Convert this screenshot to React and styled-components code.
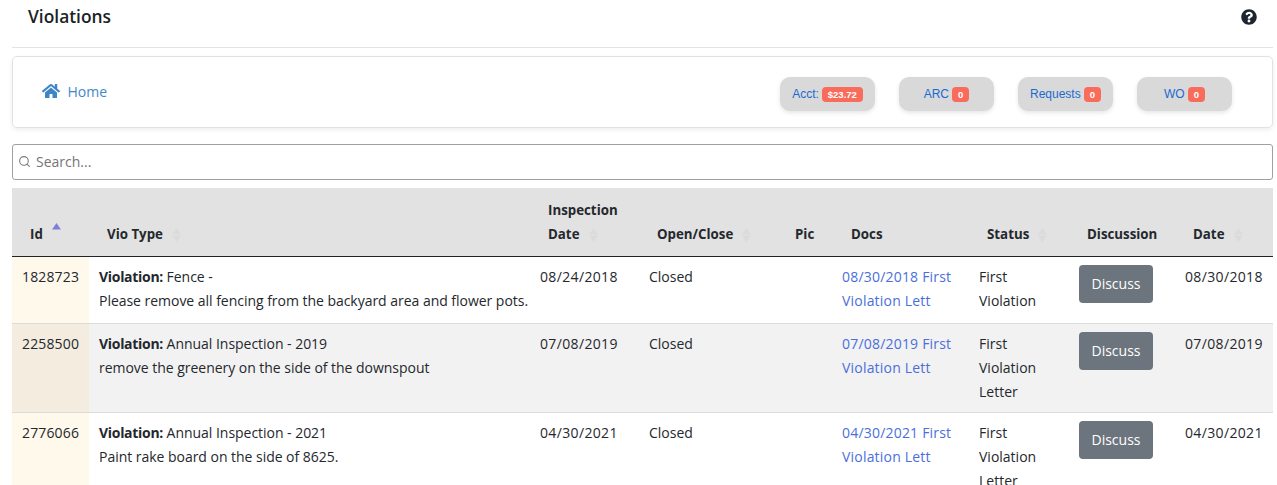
import React from 'react'
import styled, { createGlobalStyle } from 'styled-components'
import { FaHome, FaQuestionCircle } from 'react-icons/fa'
import { FiSearch } from 'react-icons/fi'

const GlobalStyle = createGlobalStyle`
  html, body {
    margin: 0;
    height: 485px;
    overflow: hidden;
    background: #fff;
    font-family: "Open Sans", "Noto Sans", sans-serif;
    font-size: 14px;
    color: #212529;
  }
`

const Page = styled.div`
  padding: 0 4px 0 12px;
`

const TitleBar = styled.header`
  display: flex;
  justify-content: space-between;
  align-items: center;
  height: 47px;
  padding: 0 16px 15px;
  box-sizing: border-box;
  box-shadow: 0 1px 0 #e3e3e3;
`

const Title = styled.h1`
  margin: 0;
  font-size: 17.4px;
  font-weight: 600;
  color: #1c1f24;
`

const HelpIcon = styled(FaQuestionCircle)`
  font-size: 16px;
  margin-top: 1px;
  color: #1c2530;
`

const NavCard = styled.nav`
  display: flex;
  justify-content: space-between;
  align-items: center;
  height: 72px;
  margin-top: 9px;
  padding: 0 40px 0 29px;
  box-sizing: border-box;
  border: 1px solid #e2e2e2;
  border-radius: 5px;
  box-shadow: 0 2px 5px rgba(0, 0, 0, 0.07);
`

const HomeLink = styled.a`
  display: flex;
  align-items: center;
  gap: 7.5px;
  margin-bottom: 2px;
  color: #3f88c9;
  font-size: 14px;
`

const HomeIcon = styled(FaHome)`
  font-size: 18px;
  color: #3d85c6;
`

const Pills = styled.div`
  display: flex;
  gap: 24px;
  margin-top: 4px;
`

const Pill = styled.a`
  display: flex;
  align-items: center;
  justify-content: center;
  gap: 3px;
  width: 95px;
  height: 34px;
  border-radius: 10px;
  background: #d9d9d9;
  box-shadow: 0 2px 4px rgba(0, 0, 0, 0.1);
  color: #1b6ad2;
  font-family: "Liberation Sans", Arial, sans-serif;
  font-size: 12px;
`

const Badge = styled.span`
  padding: 2px 6px;
  border-radius: 4px;
  background: #f96b5b;
  color: #fff;
  font-size: 9.5px;
  font-weight: 700;
  line-height: 11px;
`

const SearchBox = styled.label`
  display: flex;
  align-items: center;
  gap: 5px;
  height: 36px;
  margin-top: 16px;
  padding: 0 0 2px 5px;
  box-sizing: border-box;
  border: 1px solid #a0a0a0;
  border-radius: 3px;
  color: #7c7c7c;
`

const SearchInput = styled.input`
  flex: 1;
  border: 0;
  outline: 0;
  padding: 0;
  font: inherit;
  &::placeholder {
    color: #757575;
    opacity: 1;
  }
`

const Table = styled.table`
  width: 1261px;
  margin-top: 8px;
  border-collapse: collapse;
  table-layout: fixed;
`

const HeadCell = styled.th`
  height: 68px;
  padding: 0 0 10px 18px;
  box-sizing: border-box;
  background: #e2e2e2;
  border-bottom: 1px solid #212529;
  text-align: left;
  vertical-align: bottom;
  font-size: 13.3px;
  font-weight: 700;
  line-height: 24px;
  color: #24282d;
  white-space: ${p => (p.$wrap ? 'normal' : 'nowrap')};
`

const SortMark = styled.svg`
  width: 9px;
  height: 14px;
  margin-left: 9px;
  vertical-align: ${p => (p.$active ? '2px' : '-3px')};
`

const Row = styled.tr`
  height: 67px;
  background: ${p => (p.$even ? '#f2f2f2' : '#fff')};
  border-bottom: 1px solid #dcdcdc;
`

const Cell = styled.td`
  padding: 8px 8px 8px 10px;
  vertical-align: top;
  line-height: 24px;
  font-size: 14px;
  color: #24282d;
`

const IdCell = styled(Cell)`
  letter-spacing: 0.15px;
  background: ${p => (p.$even ? '#f3ecdf' : '#fff9ec')};
`

const NoteCell = styled(Cell)`
  padding-right: 0;
  letter-spacing: -0.03px;
  white-space: nowrap;
`

const NoteLabel = styled.strong`
  letter-spacing: -0.3px;
`

const DateCell = styled(Cell)`
  padding-right: 0;
  letter-spacing: 0.35px;
`

const DocCell = styled(Cell)`
  padding: 8px 0 8px 9px;
`

const DocLink = styled.a`
  color: #4a6fdc;
  letter-spacing: 0.2px;
`

const DiscussButton = styled.button`
  display: block;
  width: 74px;
  height: 38px;
  padding: 0;
  border: 0;
  border-radius: 4px;
  background: #6c757d;
  color: #fff;
  font: inherit;
`

const columns = [
  { label: 'Id', width: 77, sort: 'active' },
  { label: 'Vio Type', width: 441, sort: 'idle' },
  { label: 'Inspection Date', width: 109, sort: 'idle', wrap: true },
  { label: 'Open/Close', width: 138, sort: 'idle' },
  { label: 'Pic', width: 56 },
  { label: 'Docs', width: 136 },
  { label: 'Status', width: 100, sort: 'idle' },
  { label: 'Discussion', width: 106 },
  { label: 'Date', width: 98, sort: 'idle' },
]

const violations = [
  {
    id: '1828723',
    type: 'Fence -',
    note: 'Please remove all fencing from the backyard area and flower pots.',
    inspected: '08/24/2018',
    doc: '08/30/2018 First Violation Lett',
    status: 'First Violation',
    date: '08/30/2018',
  },
  {
    id: '2258500',
    type: 'Annual Inspection - 2019',
    note: 'remove the greenery on the side of the downspout',
    inspected: '07/08/2019',
    doc: '07/08/2019 First Violation Lett',
    status: 'First Violation Letter',
    date: '07/08/2019',
  },
  {
    id: '2776066',
    type: 'Annual Inspection - 2021',
    note: 'Paint rake board on the side of 8625.',
    inspected: '04/30/2021',
    doc: '04/30/2021 First Violation Lett',
    status: 'First Violation Letter',
    date: '04/30/2021',
  },
]

const SortIcon = ({ active }) => (
  <SortMark viewBox="0 0 9 14" $active={active}>
    <path d="M4.5 0 L9 6.5 L0 6.5 Z" fill={active ? '#7d7fdc' : '#dbdbdb'} />
    {!active && <path d="M4.5 14 L9 7.5 L0 7.5 Z" fill="#dbdbdb" />}
  </SortMark>
)

const App = () => {
  return (
    <Page>
      <GlobalStyle />
      <TitleBar>
        <Title>Violations</Title>
        <HelpIcon />
      </TitleBar>
      <NavCard>
        <HomeLink>
          <HomeIcon />
          Home
        </HomeLink>
        <Pills>
          <Pill>Acct: <Badge>$23.72</Badge></Pill>
          <Pill>ARC <Badge>0</Badge></Pill>
          <Pill>Requests <Badge>0</Badge></Pill>
          <Pill>WO <Badge>0</Badge></Pill>
        </Pills>
      </NavCard>
      <SearchBox>
        <FiSearch size={13} />
        <SearchInput placeholder="Search..." />
      </SearchBox>
      <Table>
        <colgroup>
          {columns.map(col => <col key={col.label} width={col.width} />)}
        </colgroup>
        <thead>
          <tr>
            {columns.map(col => (
              <HeadCell key={col.label} $wrap={col.wrap}>
                {col.label}
                {col.sort && <SortIcon active={col.sort === 'active'} />}
              </HeadCell>
            ))}
          </tr>
        </thead>
        <tbody>
          {violations.map((vio, i) => (
            <Row key={vio.id} $even={i % 2 === 1}>
              <IdCell $even={i % 2 === 1}>{vio.id}</IdCell>
              <NoteCell>
                <NoteLabel>Violation:</NoteLabel> {vio.type}
                <br />
                {vio.note}
              </NoteCell>
              <DateCell>{vio.inspected}</DateCell>
              <Cell>Closed</Cell>
              <Cell />
              <DocCell><DocLink>{vio.doc}</DocLink></DocCell>
              <Cell>{vio.status}</Cell>
              <Cell><DiscussButton>Discuss</DiscussButton></Cell>
              <DateCell>{vio.date}</DateCell>
            </Row>
          ))}
        </tbody>
      </Table>
    </Page>
  )
}

export default App
